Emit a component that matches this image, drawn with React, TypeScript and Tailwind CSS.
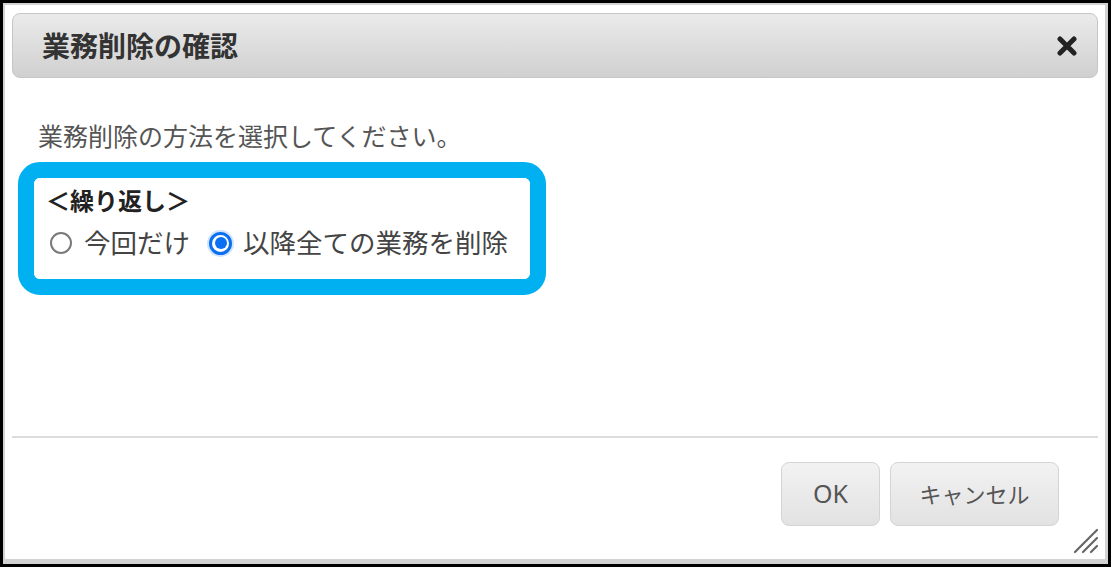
const jp = "font-['Noto_Sans','Noto_Sans_CJK_JP',sans-serif]";

const Radio = ({ checked }: { checked: boolean }) =>
  checked ? (
    <span className="flex h-[27px] w-[27px] shrink-0 items-center justify-center rounded-full bg-[#cfe3ff]">
      <span className="flex h-[23px] w-[23px] items-center justify-center rounded-full border-[3px] border-[#0a6ff0] bg-white">
        <span className="block h-[12px] w-[12px] rounded-full bg-[#0a6ff0]" />
      </span>
    </span>
  ) : (
    <span className="block h-[22px] w-[22px] shrink-0 rounded-full border-2 border-[#7a7a7a] bg-white" />
  );

export default function App() {
  return (
    <div className={`h-[567px] w-[1111px] border-[3px] border-black bg-white ${jp}`}>
      <div className="relative flex h-full flex-col border-b-[5px] border-l-2 border-r-[3px] border-t-2 border-[#d2d2d2]">
        {/* title bar */}
        <div className="mx-[7px] mt-[8px] flex h-[65px] items-center justify-between rounded-[8px] border border-[#c6c6c6] bg-gradient-to-b from-[#ebebeb] to-[#d0d0d0] pl-[29px] pr-[20px]">
          <span className="text-[28px] font-bold leading-none text-[#333]">業務削除の確認</span>
          <svg width="20" height="20" viewBox="0 0 20 20">
            <path d="M3 3 L17 17 M17 3 L3 17" stroke="#222" strokeWidth="5" strokeLinecap="round" />
          </svg>
        </div>

        {/* body */}
        <div className="flex-1 pl-[13px]">
          <p className="mt-[44px] pl-[20px] text-[25px] leading-[28px] text-[#555]">
            業務削除の方法を選択してください。
          </p>
          <div className="mt-[12px] h-[133px] w-[528px] rounded-[22px] border-[16px] border-[#00b0f0]">
            <div className="h-full rounded-[6px] bg-white pl-[12px] pt-[9px]">
              <div className="text-[24px] font-bold leading-[28px] text-[#222]">＜繰り返し＞</div>
              <div className="mt-[14px] flex items-center text-[26.5px] leading-[28px] text-[#444]">
                <span className="ml-[4px] flex">
                  <Radio checked={false} />
                </span>
                <span className="ml-[12px]">今回だけ</span>
                <span className="ml-[17px] flex">
                  <Radio checked />
                </span>
                <span className="ml-[9px]">以降全ての業務を削除</span>
              </div>
            </div>
          </div>
        </div>

        {/* footer */}
        <div className="mx-[7px] h-[2px] bg-[#dcdcdc]" />
        <div className="flex h-[121px] justify-end gap-[10px] pr-[46px] pt-[24px]">
          <button className="h-[64px] w-[99px] rounded-[8px] border border-[#d4d4d4] bg-gradient-to-b from-[#f2f2f2] to-[#e2e2e2] text-[25px] text-[#555]">
            OK
          </button>
          <button className="h-[64px] w-[169px] rounded-[8px] border border-[#d4d4d4] bg-gradient-to-b from-[#f2f2f2] to-[#e2e2e2] text-[22px] text-[#555]">
            キャンセル
          </button>
        </div>

        {/* resize grip */}
        <svg className="absolute bottom-[5px] right-[6px]" width="26" height="26" viewBox="0 0 26 26">
          <path d="M2 24 L24 2 M10 24 L24 10 M18 24 L24 18" stroke="#666" strokeWidth="2.2" strokeLinecap="round" />
        </svg>
      </div>
    </div>
  );
}
